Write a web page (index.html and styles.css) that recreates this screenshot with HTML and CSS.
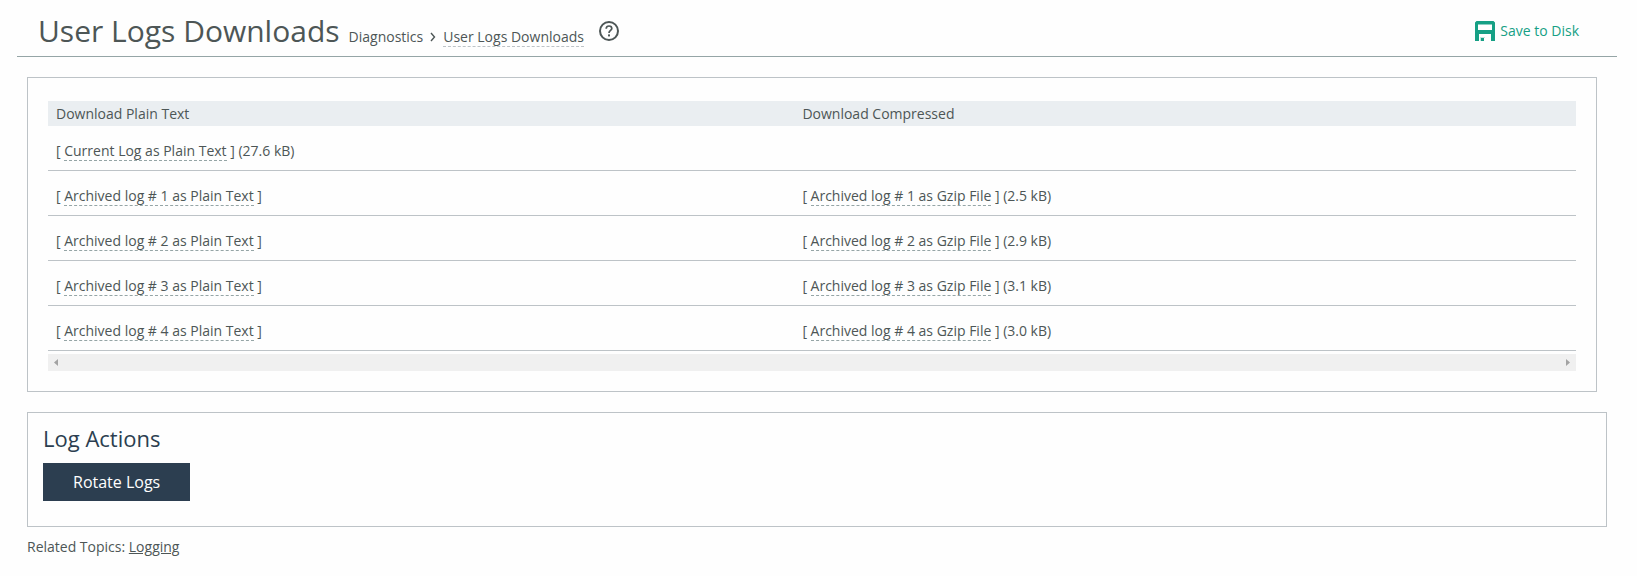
FILE: index.html
```html
<!DOCTYPE html>
<html lang="en">
<head>
    <meta charset="UTF-8">
    <meta name="viewport" content="width=device-width, initial-scale=1.0">
    <title>User Logs Downloads</title>
    <link rel="stylesheet" href="styles.css">
</head>
<body>
    <header class="page-header">
        <h1>User Logs Downloads</h1>
        <nav class="breadcrumb">
            <span>Diagnostics</span>
            <svg class="chevron" width="6" height="10" viewBox="0 0 6 10"><path d="M1 1l3.500 4L1 9" fill="none" stroke="#4d5656" stroke-width="1.4"/></svg>
            <a class="crumb-link" href="#">User Logs Downloads</a>
        </nav>
        <button class="help-button" aria-label="Help">
            <svg width="20" height="20" viewBox="0 0 20 20">
                <circle cx="10" cy="10" r="9" fill="none" stroke="#4d5656" stroke-width="2"/>
                <path d="M7.2 7.8C7.2 6 8.4 5 10 5s2.8 1 2.8 2.5C12.8 9.3 10 9.6 10 12" fill="none" stroke="#4d5656" stroke-width="1.7"/>
                <rect x="9" y="13.4" width="2" height="2" fill="#4d5656"/>
            </svg>
        </button>
        <button class="save-button">
            <svg width="20" height="20" viewBox="0 0 20 20">
                <path fill="#16a085" fill-rule="evenodd" d="M1.500 0h17L20 1.500V20h-4v-7H4v7H0V1.500zM3 3v6h14V3z"/>
                <path fill="#16a085" opacity="0.5" d="M3 3h14v1H3z"/>
                <path fill="#16a085" opacity="0.25" d="M5 16h5v1H6v3H5z"/>
                <path fill="#16a085" d="M6 17h3v3H6z"/>
            </svg>
            <span>Save to Disk</span>
        </button>
    </header>

    <main>
        <section class="panel downloads">
            <table class="log-table">
                <thead>
                    <tr><th class="col-plain">Download Plain Text</th><th>Download Compressed</th></tr>
                </thead>
                <tbody>
                    <tr>
                        <td>[ <a href="#">Current Log as Plain Text</a> ] (27.6 kB)</td>
                        <td></td>
                    </tr>
                    <tr>
                        <td>[ <a href="#">Archived log # 1 as Plain Text</a> ]</td>
                        <td>[ <a href="#">Archived log # 1 as Gzip File</a> ] (2.5 kB)</td>
                    </tr>
                    <tr>
                        <td>[ <a href="#">Archived log # 2 as Plain Text</a> ]</td>
                        <td>[ <a href="#">Archived log # 2 as Gzip File</a> ] (2.9 kB)</td>
                    </tr>
                    <tr>
                        <td>[ <a href="#">Archived log # 3 as Plain Text</a> ]</td>
                        <td>[ <a href="#">Archived log # 3 as Gzip File</a> ] (3.1 kB)</td>
                    </tr>
                    <tr>
                        <td>[ <a href="#">Archived log # 4 as Plain Text</a> ]</td>
                        <td>[ <a href="#">Archived log # 4 as Gzip File</a> ] (3.0 kB)</td>
                    </tr>
                </tbody>
            </table>
            <div class="scroll-track">
                <button aria-label="Scroll left"><svg width="4" height="7" viewBox="0 0 4 7"><path d="M4 0v7L0 3.500z" fill="#a3a3a3"/></svg></button>
                <button aria-label="Scroll right"><svg width="4" height="7" viewBox="0 0 4 7"><path d="M0 0v7l4-3.500z" fill="#a3a3a3"/></svg></button>
            </div>
        </section>

        <section class="panel actions">
            <h2>Log Actions</h2>
            <button class="rotate-button">Rotate Logs</button>
        </section>

        <p class="related">Related Topics: <a href="#">Logging</a></p>
    </main>
</body>
</html>
```
FILE: styles.css
```css
body {
    margin: 0;
    font-family: "Open Sans", sans-serif;
    font-size: 14px;
    line-height: 19px;
    color: #4d5656;
    background-color: #fefefe;
}

a {
    color: inherit;
}

button {
    padding: 0;
    border: none;
    background: none;
    font-family: inherit;
    cursor: pointer;
}

svg {
    display: block;
}

.page-header {
    display: flex;
    align-items: baseline;
    margin: 0 20px 0 17px;
    padding: 10px 38px 5px 21px;
    border-bottom: 1px solid #95a5a6;
}

h1 {
    margin: 0 9px 0 0;
    font-size: 30px;
    font-weight: 400;
    line-height: 41px;
}

.breadcrumb {
    display: flex;
    align-items: center;
    gap: 7px;
}

.crumb-link {
    border-bottom: 1px dashed #bdc3c7;
    text-decoration: none;
}

.help-button {
    align-self: center;
    margin-left: 15px;
}

.save-button {
    display: flex;
    align-self: center;
    align-items: center;
    gap: 5px;
    margin-left: auto;
    font-size: 14px;
    line-height: 19px;
    color: #16a085;
}

.panel {
    border: 1px solid #bdc3c7;
}

.downloads {
    margin: 20px 40px 0 27px;
    padding: 23px 20px 20px;
}

.log-table {
    width: 100%;
    border-collapse: collapse;
    table-layout: fixed;
    text-align: left;
}

.log-table th {
    padding: 3px 8px;
    font-weight: 400;
    background-color: #eaeef1;
}

.log-table .col-plain {
    width: 47.8%;
}

.log-table td {
    padding: 15px 8px 10px;
    border-bottom: 1px solid #bdc3c7;
}

.log-table a {
    border-bottom: 1px dashed #95a5a6;
    text-decoration: none;
}

.scroll-track {
    display: flex;
    justify-content: space-between;
    margin-top: 3px;
    padding: 5px 6px;
    background-color: #f0f0f0;
}

.actions {
    margin: 20px 30px 0 27px;
    padding: 10px 15px 25px;
}

h2 {
    margin: 0 0 10px;
    font-size: 22px;
    font-weight: 400;
    line-height: 30px;
    color: #2c3e50;
}

.rotate-button {
    padding: 8px 30px;
    font-size: 16px;
    line-height: 22px;
    color: #fff;
    background-color: #2c3e50;
}

.related {
    margin: 10px 27px;
}
```
